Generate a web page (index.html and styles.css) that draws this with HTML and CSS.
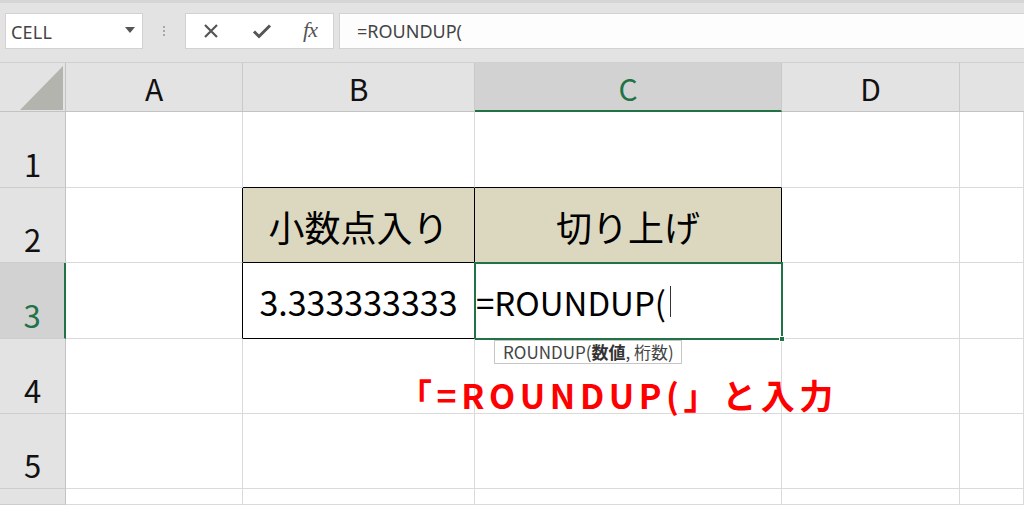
FILE: index.html
```html
<!DOCTYPE html>
<html lang="ja">
<head>
<meta charset="utf-8">
<title>ROUNDUP</title>
<link rel="stylesheet" href="styles.css">
</head>
<body>
<div class="toolbar">
  <div class="namebox">
    <span class="name">CELL</span>
    <svg class="dd" width="10" height="6" viewBox="0 0 10 6"><path d="M0 0h10L5 6z" fill="#555"/></svg>
  </div>
  <div class="grip"><i></i><i></i><i></i></div>
  <div class="btnbox">
    <svg width="18" height="18" viewBox="0 0 18 18"><path d="M3 3l12 12M15 3L3 15" stroke="#555" stroke-width="2.2" fill="none"/></svg>
    <svg width="20" height="18" viewBox="0 0 20 18"><path d="M2 9.5l5 5L18 3.5" stroke="#555" stroke-width="3" fill="none"/></svg>
    <span class="fx">fx</span>
  </div>
  <div class="formula">=ROUNDUP(</div>
</div>
<div class="sheet">
  <div class="corner"><svg width="66" height="49" viewBox="0 0 66 49"><path d="M20 47H63V3z" fill="#b4b4ae"/></svg></div>
  <div class="ch">A</div>
  <div class="ch">B</div>
  <div class="ch sel">C</div>
  <div class="ch">D</div>
  <div class="ch last"></div>

  <div class="rh">1</div>
  <div class="c"></div>
  <div class="c bb"></div>
  <div class="c bb"></div>
  <div class="c"></div>
  <div class="c"></div>

  <div class="rh">2</div>
  <div class="c br"></div>
  <div class="c hd">小数点入り</div>
  <div class="c hd">切り上げ</div>
  <div class="c"></div>
  <div class="c"></div>

  <div class="rh sel">3</div>
  <div class="c br"></div>
  <div class="c val">3.333333333</div>
  <div class="c active">
    <span class="entry">=ROUNDUP(<span class="caret"></span></span>
    <span class="handle"></span>
    <div class="tip">ROUNDUP(<b>数値</b>, 桁数)</div>
  </div>
  <div class="c"></div>
  <div class="c"></div>

  <div class="rh">4</div>
  <div class="c"></div>
  <div class="c overflow"><span class="note">「=ROUNDUP(」と入力</span></div>
  <div class="c"></div>
  <div class="c"></div>
  <div class="c"></div>

  <div class="rh">5</div>
  <div class="c"></div>
  <div class="c"></div>
  <div class="c"></div>
  <div class="c"></div>
  <div class="c"></div>

  <div class="rh"></div>
  <div class="c"></div>
  <div class="c"></div>
  <div class="c"></div>
  <div class="c"></div>
  <div class="c"></div>
</div>
</body>
</html>
```
FILE: styles.css
```css
* { box-sizing: border-box; }
html, body { margin: 0; padding: 0; }
body {
  width: 1024px;
  height: 505px;
  overflow: hidden;
  background: #fff;
  font-family: "Noto Sans CJK JP", "Noto Sans", sans-serif;
}
.toolbar {
  height: 63px;
  background: #e3e3e3;
  border-top: 3px solid #d6d6d6;
  padding-top: 10px;
  display: flex;
  align-items: flex-start;
  border-bottom: 1px solid #d0d0d0;
}
.namebox {
  margin-left: 5px;
  width: 138px;
  height: 36px;
  background: #fff;
  border: 1px solid #d2d2d2;
  display: flex;
  align-items: center;
  justify-content: space-between;
  padding: 0 7px 0 5px;
}
.name {
  font-family: "Noto Sans", sans-serif;
  font-size: 18px;
  color: #444;
  letter-spacing: 0.2px;
  padding-top: 2px;
}
.dd { margin-top: -2px; }
.grip {
  width: 42px;
  height: 36px;
  display: flex;
  flex-direction: column;
  align-items: center;
  justify-content: center;
  gap: 2px;
}
.grip i {
  width: 2px;
  height: 2px;
  background: #a8a8a8;
  display: block;
}
.btnbox {
  width: 149px;
  height: 36px;
  background: #fff;
  border: 1px solid #d2d2d2;
  display: flex;
  align-items: center;
  justify-content: space-between;
  padding: 0 16px 0 16px;
}
.fx {
  font-family: "Liberation Serif", serif;
  font-style: italic;
  font-size: 22px;
  color: #555;
  letter-spacing: -1px;
  margin-top: -2px;
}
.formula {
  margin-left: 5px;
  flex: 1;
  height: 36px;
  background: #fdfdfd;
  border: 1px solid #d2d2d2;
  border-right: none;
  font-family: "Noto Sans", sans-serif;
  font-size: 18px;
  color: #444;
  padding-left: 17px;
  line-height: 34px;
}
.sheet {
  display: grid;
  grid-template-columns: 66px 177px 232px 307px 178px 1fr;
  grid-template-rows: 49px 76px 75px 76px 75px 75px 1fr;
  height: 442px;
}
.corner {
  background: #e3e3e3;
  border-right: 1px solid #c3c3c3;
  border-bottom: 1px solid #c3c3c3;
}
.corner svg { display: block; }
.ch {
  background: #e3e3e3;
  border-right: 1px solid #c9c9c9;
  border-bottom: 1px solid #c3c3c3;
  display: flex;
  align-items: center;
  justify-content: center;
  font-size: 30px;
  color: #111;
  padding-top: 2px;
}
.ch.last { border-right: none; }
.ch.sel {
  background: #d2d2d2;
  color: #217346;
  border-bottom: 2px solid #217346;
}
.rh {
  background: #e3e3e3;
  border-right: 1px solid #c3c3c3;
  border-bottom: 1px solid #cdcdcd;
  display: flex;
  align-items: flex-end;
  justify-content: center;
  font-size: 31px;
  line-height: 1;
  color: #111;
  padding-bottom: 8px;
}
.rh.sel {
  background: #d2d2d2;
  color: #217346;
  border-right: 2px solid #217346;
}
.c {
  border-right: 1px solid #dadada;
  border-bottom: 1px solid #dadada;
  display: flex;
  align-items: center;
  justify-content: center;
  color: #000;
  position: relative;
}
.c.bb { border-bottom-color: #000; }
.c.br { border-right-color: #000; }
.c.hd {
  background: #dcd8c0;
  border-right-color: #000;
  border-bottom-color: #000;
  font-size: 36px;
  padding-top: 2px;
}
.c.val {
  border-right-color: #000;
  border-bottom-color: #000;
  font-size: 34px;
  padding-top: 2px;
}
.c.active {
  justify-content: flex-start;
  border-right-color: #000;
  border-bottom-color: #000;
}
.c.active::after {
  content: "";
  position: absolute;
  left: -1px;
  top: -1px;
  right: -2px;
  bottom: -2px;
  border: 2px solid #217346;
  pointer-events: none;
}
.entry {
  font-size: 33px;
  padding-left: 1px;
  padding-top: 2px;
  display: flex;
  align-items: center;
}
.caret {
  display: inline-block;
  width: 1px;
  height: 31px;
  background: #333;
  margin-left: 4px;
}
.handle {
  position: absolute;
  right: -4px;
  bottom: -4px;
  width: 6px;
  height: 6px;
  background: #217346;
  border: 1px solid #fff;
  z-index: 2;
}
.tip {
  position: absolute;
  left: 19px;
  top: calc(100% + 2px);
  height: 24px;
  padding: 0 7px 0 8px;
  background: #fff;
  border: 1px solid #c6c6c6;
  font-size: 17px;
  line-height: 22px;
  color: #444;
  white-space: nowrap;
  z-index: 3;
}
.tip b { color: #333; }
.note {
  position: absolute;
  left: 155px;
  bottom: -3px;
  font-size: 34px;
  font-weight: bold;
  color: #ff0000;
  letter-spacing: 4.6px;
  white-space: nowrap;
  line-height: 1.2;
  z-index: 1;
}
```
